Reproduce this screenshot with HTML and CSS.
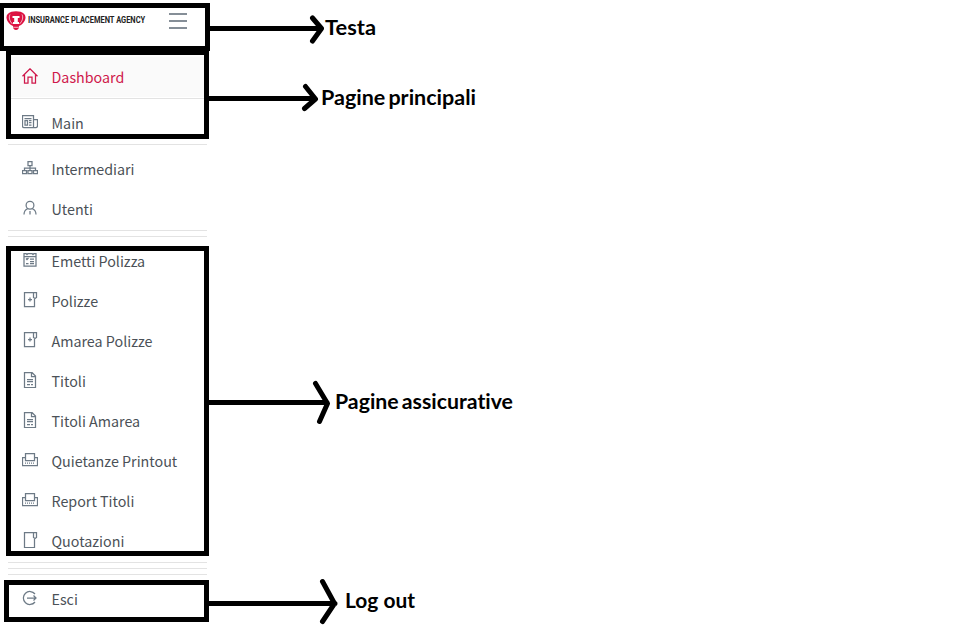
FILE: index.html
```html
<!DOCTYPE html>
<html lang="it">
<head>
<meta charset="utf-8">
<title>Insurance Placement Agency</title>
<link rel="stylesheet" href="styles.css">
</head>
<body>
<svg class="defs" width="0" height="0" aria-hidden="true">
  <symbol id="home" viewBox="0 0 16 16"><path d="M.5 8.300 8 .8l7.500 7.500M2.500 6.800v8.200h3.500V9h4v6h3.500V6.800"/></symbol>
  <symbol id="news" viewBox="0 0 16 16"><path d="M.5 1.500h11v12H2A1.500 1.500 0 0 1 .5 12zM11.500 5.500h4V12a1.500 1.500 0 0 1-1.500 1.500h-3M2.500 4.500h7M3 6.500h2.500v4.500H3zM7 6.500h2.500M7 8.500h2.500M7 11h2.500"/></symbol>
  <symbol id="tree" viewBox="0 0 16 16"><path d="M6 1.500h4v4H6zM8 5.500v5M2.500 10.500v-2.500h11v2.500M.5 10.500h4v3h-4zM6 10.500h4v3H6zM11.500 10.500h4v3h-4z"/></symbol>
  <symbol id="user" viewBox="0 0 16 16"><circle cx="8" cy="5.200" r="3.900"/><path d="M2 14.500c0-3 1.600-5 4-6M14 14.500c0-3-1.600-5-4-6M8 11v3.500"/></symbol>
  <symbol id="form" viewBox="0 0 16 16"><path d="M2 1.500h2l1 1 1-1h4l1 1 1-1h2v12.500H2zM2 4.500h12M4 6.500l1 1 1.500-1.500M8 7h4M8 9.500h4M4 11.500h2.500M8 11.500h4"/></symbol>
  <symbol id="policy" viewBox="0 0 16 16"><path d="M11.500 .5h-9v14h10V7M11.500 .5h3v5l-1.500 1-1.500-1zM8 5.500v4M6 7.500h4"/></symbol>
  <symbol id="doc" viewBox="0 0 16 16"><path d="M2.500 .5H10l3.500 3.500v11.500h-11zM9.500 .5v4h4M5 7.500h6M5 9.500h6M5 12.500h3M9 12.500h2"/></symbol>
  <symbol id="print" viewBox="0 0 16 16"><path d="M3.500 8.500v-7h9v7zM3 5.500H.5v8h15v-8H13"/><path stroke-dasharray="1 1" d="M3 11h10"/></symbol>
  <symbol id="book" viewBox="0 0 16 16"><path d="M11.500 .5h-9v15h10V7M11.500 .5h3v5l-1.500 1-1.500-1z"/></symbol>
  <symbol id="exit" viewBox="0 0 16 16"><path d="M13 4A6.500 6.500 0 1 0 13 12M5 8h9M11.500 5.500 14 8l-2.500 2.500"/></symbol>
</svg>

<nav class="sidebar">
  <header class="head">
    <svg class="logo" viewBox="0 0 20 20"><path fill="#dc1242" d="M5.500 .8Q10-.4 14.500 .8C18 2 19.800 4.200 19.500 7c-.3 2.800-2 5-4.500 7l-2 1-.5 2.800Q10 20.200 7.500 17.800L7 15l-2-1C2.500 12 .8 9.800 .5 7 .2 4.200 2 2 5.500 .8z"/><path fill="none" stroke="#fff" stroke-width=".7" d="M4 3.500c-1.500 3-.5 6.500 2.500 9.500M16 3.500c1.500 3 .5 6.500-2.500 9.500M7.500 16.300h5"/><path fill="#fff" d="M6.500 5h7v2h-1.700v4h1.200v2H7v-2h1.200V7H6.500z"/></svg>
    <span class="brand">INSURANCE PLACEMENT AGENCY</span>
    <span class="burger"><i></i><i></i><i></i></span>
  </header>
  <a class="item active"><svg><use href="#home"/></svg><span>Dashboard</span></a>
  <hr>
  <a class="item"><svg><use href="#news"/></svg><span>Main</span></a>
  <hr>
  <a class="item"><svg><use href="#tree"/></svg><span>Intermediari</span></a>
  <a class="item"><svg><use href="#user"/></svg><span>Utenti</span></a>
  <hr>
  <hr>
  <a class="item"><svg><use href="#form"/></svg><span>Emetti Polizza</span></a>
  <a class="item"><svg><use href="#policy"/></svg><span>Polizze</span></a>
  <a class="item"><svg><use href="#policy"/></svg><span>Amarea Polizze</span></a>
  <a class="item"><svg><use href="#doc"/></svg><span>Titoli</span></a>
  <a class="item"><svg><use href="#doc"/></svg><span>Titoli Amarea</span></a>
  <a class="item"><svg><use href="#print"/></svg><span>Quietanze Printout</span></a>
  <a class="item"><svg><use href="#print"/></svg><span>Report Titoli</span></a>
  <a class="item"><svg><use href="#book"/></svg><span>Quotazioni</span></a>
  <hr>
  <hr>
  <hr>
  <a class="item"><svg><use href="#exit"/></svg><span>Esci</span></a>
</nav>

<svg class="notes" viewBox="0 0 970 625">
  <g class="frames">
    <path d="M0 3h210v48H0zM4 8v38h201V8z"/>
    <path d="M6 50h203v89H6zM11 55v79h193V55z"/>
    <path d="M6 246h203v310H6zM11 251v300h193V251z"/>
    <path d="M4 580h205v42H4zM9 585v32h195v-32z"/>
  </g>
  <g class="arrows">
    <path d="M209 28.500h111M312.500 18l9 10.500-9 12.500"/>
    <path d="M208 98.500h107M305.500 86.500l10 12.500-11 9.500"/>
    <path d="M208 402.500h119M315.500 383.500l12 20-8 18"/>
    <path d="M208 603.500h127M322.500 581.500l12 22-12 18"/>
  </g>
  <g class="labels">
    <text x="325" y="35" textLength="51" lengthAdjust="spacingAndGlyphs">Testa</text>
    <text class="tight" x="321" y="105" textLength="155" lengthAdjust="spacingAndGlyphs">Pagine principali</text>
    <text class="tight" x="335" y="409" textLength="178" lengthAdjust="spacingAndGlyphs">Pagine assicurative</text>
    <text x="345" y="608" textLength="70" lengthAdjust="spacingAndGlyphs">Log out</text>
  </g>
</svg>
</body>
</html>
```
FILE: styles.css
```css
body {
  margin: 0;
  width: 970px;
  height: 625px;
  overflow: hidden;
  background: #fff;
  position: relative;
}

.defs {
  position: absolute;
}

.sidebar {
  display: flex;
  flex-direction: column;
  width: 199px;
  margin-left: 8px;
  font-family: "Noto Sans CJK SC", "Noto Sans", sans-serif;
  font-size: 14.3px;
  color: #4b5157;
}

.head {
  display: flex;
  align-items: center;
  height: 42px;
  margin: 0 0 15px -2px;
}

.logo {
  width: 20px;
  height: 20px;
  margin-top: -1px;
  flex: none;
}

.brand {
  flex: none;
  width: 117px;
  margin: -2px 0 0 2px;
  font: bold 8.3px/10px Roboto, sans-serif;
  color: #222;
  white-space: nowrap;
  transform: scaleX(0.9);
  transform-origin: left;
}

.burger {
  display: flex;
  flex-direction: column;
  gap: 5px;
  margin-left: 24px;
}

.burger i {
  width: 18px;
  height: 2px;
  background: #858e97;
}

.item {
  display: flex;
  align-items: center;
  height: 40px;
  padding-left: 14px;
  gap: 13.5px;
  line-height: 20px;
}

.item svg {
  width: 16px;
  height: 16px;
  margin-top: -2px;
  fill: none;
  stroke: #6d7a86;
  stroke-width: 1.25;
}

.item.active {
  background: #fafafa;
  color: #cf184b;
}

.item.active svg {
  stroke: #cf184b;
}

hr {
  width: 100%;
  height: 1px;
  margin: 1px 0 4px;
  border: 0;
  background: #e3e3e3;
}

.notes {
  position: absolute;
  left: 0;
  top: 0;
  width: 970px;
  height: 625px;
}

.frames {
  fill: #000;
  fill-rule: evenodd;
}

.arrows {
  fill: none;
  stroke: #000;
  stroke-width: 5;
  stroke-linecap: round;
  stroke-linejoin: round;
}

.labels {
  font: bold 20px Lato, sans-serif;
  font-variant-ligatures: none;
  fill: #000;
}

.tight {
  word-spacing: -2px;
}
```
